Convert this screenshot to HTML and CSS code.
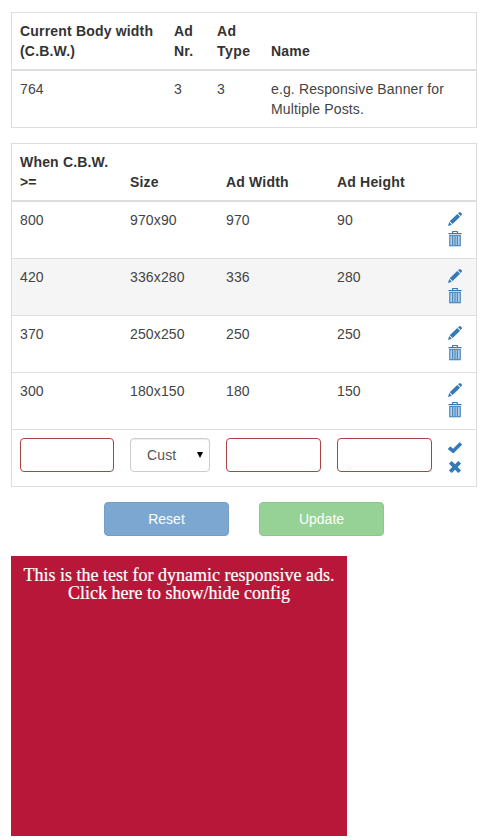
FILE: index.html
```html
<!DOCTYPE html>
<html lang="en">
<head>
<meta charset="utf-8">
<title>Responsive ads config</title>
<link rel="stylesheet" href="styles.css">
</head>
<body>
<svg class="sprite" aria-hidden="true">
  <symbol id="pencil" viewBox="0 0 14 14"><path d="M0 14l1.200-4L3.900 12.800zM1.700 9.300L9.200 1.900l2.900 2.900-7.500 7.300zM10 1.300L11.300.2q.6-.4 1.100 0l1.400 1.400q.4.5 0 1.100L12.700 4z"/></symbol>
  <symbol id="trash" viewBox="0 0 14 16"><path fill-rule="evenodd" d="M4 2V.8Q4 0 4.800 0h4.400Q10 0 10 .8V2h3.500v1.200H.5V2zM5.200 2h3.600V1H5.200z"/><path class="can" d="M1.500 4h11v11h-11z"/><path d="M1.300 4h1v10.300h9.400V4h1v11.200H1.300zM4.200 5h1v9h-1zM6.500 5h1v9h-1zM8.800 5h1v9h-1zM1.300 4h11.400v.8H1.300z"/></symbol>
  <symbol id="check" viewBox="0 0 14 12"><path d="M.2 6.600L2 4.800q.4-.4.800 0l2.300 2L11.300.6q.4-.4.800 0l1.700 1.700q.4.4 0 .8l-8 7.900q-.5.400-1 0L.2 7.500q-.4-.4 0-.9z"/></symbol>
  <symbol id="cross" viewBox="0 0 12 12"><path d="M3 .3L6 3.300 9 .3q.3-.3.700 0l2 2q.3.300 0 .7L8.700 6l3 3q.3.300 0 .7l-2 2q-.3.300-.7 0L6 8.700l-3 3q-.3.300-.7 0l-2-2Q0 9.400.3 9l3-3-3-3Q0 2.700.3 2.300l2-2Q2.600 0 3 .3z"/></symbol>
</svg>
<main class="config">
  <table class="table">
    <colgroup><col class="c-body"><col class="c-nr"><col class="c-type"><col></colgroup>
    <thead><tr><th>Current Body width (C.B.W.)</th><th>Ad Nr.</th><th class="type">Ad Type</th><th>Name</th></tr></thead>
    <tbody><tr><td>764</td><td>3</td><td>3</td><td>e.g. Responsive Banner for Multiple Posts.</td></tr></tbody>
  </table>

  <table class="table">
    <colgroup><col class="c-when"><col class="c-size"><col class="c-dim"><col class="c-dim"><col></colgroup>
    <thead><tr><th>When C.B.W. &gt;=</th><th>Size</th><th>Ad Width</th><th>Ad Height</th><th></th></tr></thead>
    <tbody>
      <tr><td>800</td><td>970x90</td><td>970</td><td>90</td><td><div class="actions"><svg class="pencil"><use href="#pencil"/></svg><svg class="trash"><use href="#trash"/></svg></div></td></tr>
      <tr class="active"><td>420</td><td>336x280</td><td>336</td><td>280</td><td><div class="actions"><svg class="pencil"><use href="#pencil"/></svg><svg class="trash"><use href="#trash"/></svg></div></td></tr>
      <tr><td>370</td><td>250x250</td><td>250</td><td>250</td><td><div class="actions"><svg class="pencil"><use href="#pencil"/></svg><svg class="trash"><use href="#trash"/></svg></div></td></tr>
      <tr><td>300</td><td>180x150</td><td>180</td><td>150</td><td><div class="actions"><svg class="pencil"><use href="#pencil"/></svg><svg class="trash"><use href="#trash"/></svg></div></td></tr>
      <tr>
        <td><input class="field" type="text"></td>
        <td><div class="select"><span>Cust</span><svg class="caret" viewBox="0 0 6 6"><path d="M0 0h6L3 6z"/></svg></div></td>
        <td><input class="field" type="text"></td>
        <td><input class="field" type="text"></td>
        <td><div class="actions"><svg class="check"><use href="#check"/></svg><svg class="cross"><use href="#cross"/></svg></div></td>
      </tr>
    </tbody>
  </table>

  <div class="buttons">
    <button class="btn reset" type="button">Reset</button>
    <button class="btn update" type="button">Update</button>
  </div>
  <div class="banner">This is the test for dynamic responsive ads.<br>Click here to show/hide config</div>
</main>
</body>
</html>
```
FILE: styles.css
```css
* { box-sizing: border-box; }
body {
  margin: 0;
  background: #fff;
  color: #444;
  font: 14px/20px "Liberation Sans", Arial, sans-serif;
}
.sprite { display: none; }
.config { width: 466px; margin-left: 11px; padding-top: 12px; }
.table {
  width: 100%;
  margin-bottom: 15px;
  border: 1px solid #ddd;
  border-spacing: 0;
  table-layout: fixed;
  letter-spacing: 0.13px;
}
.c-body { width: 154px; }
.c-nr { width: 43px; }
.c-type { width: 54px; }
.c-when { width: 110px; }
.c-size { width: 96px; }
.c-dim { width: 111px; }
th, td { padding: 8px; text-align: left; }
th {
  height: 58px;
  border-bottom: 2px solid #ddd;
  color: #333;
  letter-spacing: 0.18px;
  vertical-align: bottom;
}
.type { letter-spacing: 0.45px; }
td { height: 57px; border-top: 1px solid #ddd; vertical-align: top; }
tbody tr:first-child td { height: 56px; border-top: 0; }
.active { background: #f5f5f5; }
.actions {
  display: flex;
  flex-direction: column;
  align-items: center;
  width: 14px;
  fill: #337ab7;
}
.pencil { width: 14px; height: 14px; margin: 2px 0 5px; }
.trash { width: 14px; height: 16px; }
.can { fill: #b4d0e8; }
.check { width: 14px; height: 12px; margin: 4px 0 7px; }
.cross { width: 12px; height: 12px; }
.field {
  display: block;
  width: 100%;
  height: 34px;
  border: 1px solid #a94442;
  border-radius: 4px;
  background: #fff;
}
.select {
  display: flex;
  align-items: center;
  justify-content: space-between;
  height: 34px;
  padding: 0 6px 0 16px;
  border: 1px solid #ccc;
  border-radius: 4px;
  box-shadow: inset 0 1px 1px rgba(0, 0, 0, .075);
  color: #555;
}
.caret { width: 6px; height: 6px; }
.buttons { display: flex; justify-content: center; gap: 30px; margin-bottom: 20px; }
.btn {
  width: 125px;
  height: 34px;
  padding: 0;
  border: 1px solid #739fc8;
  border-radius: 4px;
  background: #7ca7d0;
  color: #fff;
  font: inherit;
}
.update { border-color: #8bc98b; background: #96d196; }
.banner {
  width: 336px;
  height: 280px;
  padding-top: 10px;
  background: #b9173a;
  color: #fff;
  font: 18px/18px "Liberation Serif", "Times New Roman", serif;
  text-align: center;
  -webkit-text-stroke: 0.2px #fff;
}
```
